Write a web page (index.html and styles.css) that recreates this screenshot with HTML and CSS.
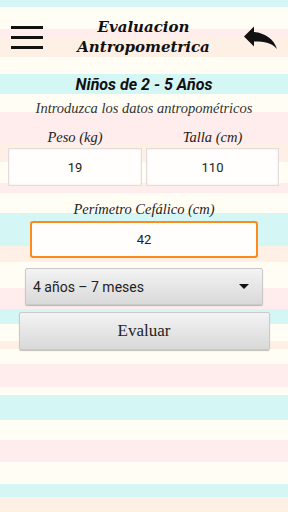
FILE: index.html
```html
<!DOCTYPE html>
<html lang="es">
<head>
  <meta charset="UTF-8">
  <meta name="viewport" content="width=device-width, initial-scale=1.0">
  <title>Evaluacion Antropometrica</title>
  <link rel="stylesheet" href="styles.css">
</head>
<body>
  <div class="page">
    <header class="topbar">
      <div class="menu-icon">
        <span></span>
        <span></span>
        <span></span>
      </div>
      <h1 class="title">Evaluacion<br>Antropometrica</h1>
      <svg class="back-icon" width="34" height="24" viewBox="0 0 34 24">
        <path d="M0 10.5 L10 0.5 V6 C21 7 30 13 33 23 C28 17 21 15.5 10 15.5 V20.5 Z" fill="#111"/>
      </svg>
    </header>

    <main>
      <h2 class="subtitle">Niños de 2 - 5 Años</h2>
      <p class="intro">Introduzca los datos antropométricos</p>

      <div class="pair">
        <div class="field">
          <label class="label">Peso (kg)</label>
          <div class="box">19</div>
        </div>
        <div class="field">
          <label class="label">Talla (cm)</label>
          <div class="box">110</div>
        </div>
      </div>

      <label class="label head-label">Perímetro Cefálico (cm)</label>
      <div class="box box-focus">42</div>

      <div class="spinner">
        <span>4 años – 7 meses</span>
        <span class="arrow"></span>
      </div>

      <div class="btn">Evaluar</div>
    </main>
  </div>
</body>
</html>
```

FILE: styles.css
```css
body {
  margin: 0;
  font-family: 'Liberation Serif', serif;
  color: #222;
}

.page {
  width: 288px;
  height: 512px;
  overflow: hidden;
  background: linear-gradient(to bottom,
    #d4f6f4 0 7px,
    #fffdf4 7px 29px,
    #ffecec 29px 37px,
    #fff0e6 37px 57px,
    #fffdf4 57px 74px,
    #d4f6f4 74px 94px,
    #fffdf4 94px 112px,
    #ffecec 112px 143px,
    #fff0e6 143px 162px,
    #fffdf4 162px 183px,
    #ffecec 183px 193px,
    #fffdf4 193px 213px,
    #d4f6f4 213px 246px,
    #fff0e6 246px 262px,
    #fffdf4 262px 288px,
    #ffecec 288px 309px,
    #d4f6f4 309px 324px,
    #fffdf4 324px 341px,
    #fff0e6 341px 349px,
    #fffdf4 349px 364px,
    #ffecec 364px 387px,
    #fffdf4 387px 395px,
    #d4f6f4 395px 420px,
    #fffdf4 420px 440px,
    #ffecec 440px 462px,
    #fffdf4 462px 484px,
    #d4f6f4 484px 497px,
    #fff0e6 497px 512px);
}

/* Header */
.topbar {
  display: flex;
  align-items: center;
  padding: 17px 10px 0 11px;
  height: 40px;
}

.menu-icon {
  display: flex;
  flex-direction: column;
  gap: 7px;
  width: 32px;
}

.menu-icon span {
  display: block;
  height: 3px;
  background-color: #111;
}

.title {
  flex: 1;
  margin: 0;
  text-align: center;
  font-family: 'DejaVu Serif', serif;
  font-size: 15px;
  line-height: 20px;
  font-style: italic;
  font-weight: bold;
  color: #111;
}

.back-icon {
  display: block;
  margin-top: 2px;
}

/* Content */
main {
  display: flex;
  flex-direction: column;
  align-items: center;
}

.subtitle {
  margin: 18px 0 0;
  font-family: Roboto, sans-serif;
  font-size: 16px;
  line-height: 20px;
  font-style: italic;
  font-weight: bold;
  color: #111;
}

.intro {
  margin: 4px 0 0;
  font-size: 14.5px;
  line-height: 18px;
  font-style: italic;
  color: #333;
}

.pair {
  display: grid;
  grid-template-columns: 134px 133px;
  gap: 4px;
  margin-top: 11px;
  align-self: flex-start;
  margin-left: 8px;
}

.field {
  display: flex;
  flex-direction: column;
  align-items: center;
  gap: 2px;
}

.label {
  display: block;
  font-size: 14.5px;
  line-height: 18px;
  font-style: italic;
  color: #222;
}

.box {
  box-sizing: border-box;
  width: 100%;
  height: 38px;
  display: flex;
  align-items: center;
  justify-content: center;
  background-color: #fffefc;
  border: 1px solid #e2dcdc;
  box-shadow: inset 0 0 3px rgba(0, 0, 0, 0.08);
  font-family: Roboto, sans-serif;
  font-size: 13px;
  color: #222;
}

.head-label {
  margin-top: 14px;
}

.box-focus {
  width: 228px;
  height: 37px;
  margin-top: 3px;
  border: 2px solid #ff8a1c;
  border-radius: 3px;
  box-shadow: none;
}

.spinner {
  box-sizing: border-box;
  width: 238px;
  height: 37px;
  margin-top: 10px;
  padding: 0 13px 0 7px;
  display: flex;
  align-items: center;
  justify-content: space-between;
  background: linear-gradient(#f3f3f3, #d9d9d9);
  border: 1px solid #cacaca;
  border-radius: 2px;
  box-shadow: 0 1px 1px rgba(0, 0, 0, 0.25);
  font-family: Roboto, sans-serif;
  font-size: 14px;
  color: #222;
}

.arrow {
  width: 0;
  height: 0;
  border-left: 5px solid transparent;
  border-right: 5px solid transparent;
  border-top: 5px solid #111;
}

.btn {
  box-sizing: border-box;
  width: 251px;
  height: 38px;
  margin-top: 7px;
  display: flex;
  align-items: center;
  justify-content: center;
  background: linear-gradient(#f3f3f3, #d9d9d9);
  border: 1px solid #cacaca;
  border-radius: 2px;
  box-shadow: 0 1px 1px rgba(0, 0, 0, 0.25);
  font-size: 17px;
  color: #222;
}
```
